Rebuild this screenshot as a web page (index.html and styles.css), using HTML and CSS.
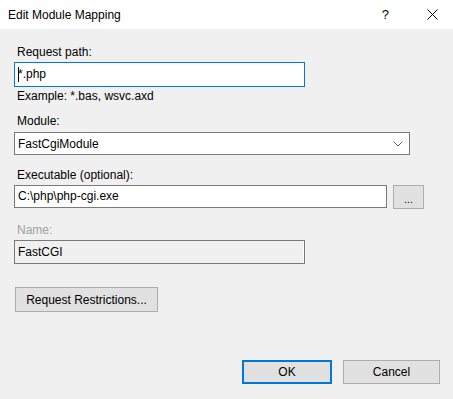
FILE: index.html
```html
<!DOCTYPE html>
<html lang="en">
<head>
    <meta charset="UTF-8">
    <title>Edit Module Mapping</title>
    <link rel="stylesheet" href="styles.css">
</head>
<body>
    <div class="dialog">
        <div class="titlebar">
            <span class="title">Edit Module Mapping</span>
            <span class="help">?</span>
            <svg class="close" width="11" height="11" viewBox="0 0 11 11">
                <path d="M0.5 0.5 L10.5 10.5 M10.5 0.5 L0.5 10.5" stroke="#000" stroke-width="1" fill="none"/>
            </svg>
        </div>

        <div class="content">
            <div class="label first">Request path:</div>
            <div class="textbox focused"><span class="caret"></span>*.php</div>
            <div class="hint">Example: *.bas, wsvc.axd</div>

            <div class="label gap-module">Module:</div>
            <div class="select">
                <span>FastCgiModule</span>
                <svg class="chevron" width="10" height="6" viewBox="0 0 10 6">
                    <path d="M0.5 0.5 L5 5 L9.5 0.5" stroke="#606060" stroke-width="1" fill="none"/>
                </svg>
            </div>

            <div class="label gap-exec">Executable (optional):</div>
            <div class="exec-row">
                <div class="textbox exec">C:\php\php-cgi.exe</div>
                <button class="btn browse">...</button>
            </div>

            <div class="label disabled gap-name">Name:</div>
            <div class="textbox readonly">FastCGI</div>

            <button class="btn restrictions">Request Restrictions...</button>

            <div class="actions">
                <button class="btn ok">OK</button>
                <button class="btn cancel">Cancel</button>
            </div>
        </div>
    </div>
</body>
</html>
```

FILE: styles.css
```css
* { margin: 0; padding: 0; box-sizing: border-box; }
body {
    font-family: "Liberation Sans", Arial, sans-serif;
    font-size: 12px;
    color: #000;
    background: #f0f0f0;
}
.dialog {
    width: 453px;
    height: 399px;
    background: #f0f0f0;
}
.titlebar {
    height: 29px;
    background: #fff;
    display: flex;
    align-items: center;
    padding-left: 8px;
}
.title { flex: 1; }
.help {
    font-size: 13px;
    margin-right: 38px;
}
.close { margin-right: 15px; }
.content {
    padding: 0 13px 0 14px;
}
.label {
    line-height: 15px;
    padding-left: 3px;
}
.label.first { margin-top: 16px; margin-bottom: 2px; }
.gap-module { margin-top: 10px; margin-bottom: 3px; }
.gap-exec { margin-top: 13px; margin-bottom: 2px; }
.gap-name { margin-top: 14px; margin-bottom: 2px; }
.label.disabled { color: #a0a0a0; }
.textbox {
    background: #fff;
    border: 1px solid #7a7a7a;
    height: 24px;
    line-height: 22px;
    padding-left: 3px;
    width: 291px;
    position: relative;
}
.textbox.focused {
    border-color: #0078d7;
    height: 25px;
    line-height: 23px;
}
.caret {
    position: absolute;
    left: 3px;
    top: 4px;
    width: 1px;
    height: 15px;
    background: #000;
}
.hint {
    margin-top: 2px;
    line-height: 15px;
    padding-left: 3px;
}
.select {
    width: 396px;
    height: 23px;
    background: #fff;
    border: 1px solid #7a7a7a;
    display: flex;
    align-items: center;
    justify-content: space-between;
    padding: 0 6px 0 3px;
}
.exec-row {
    display: flex;
    gap: 6px;
    height: 24px;
}
.textbox.exec {
    width: 373px;
    height: 23px;
    line-height: 21px;
}
.textbox.readonly {
    background: #f0f0f0;
    box-shadow: inset -1px 0 0 #fff;
}
.btn {
    font-family: inherit;
    font-size: 12px;
    color: #000;
    background: #e1e1e1;
    border: 1px solid #adadad;
    height: 24px;
}
.browse {
    width: 31px;
    font-size: 11px;
    padding-top: 3px;
}
.restrictions {
    display: block;
    margin: 23px 0 0 1px;
    width: 143px;
    height: 25px;
}
.actions {
    display: flex;
    justify-content: flex-end;
    gap: 11px;
    margin-top: 48px;
}
.ok {
    width: 90px;
    border: 2px solid #0078d7;
}
.cancel { width: 97px; }
```
